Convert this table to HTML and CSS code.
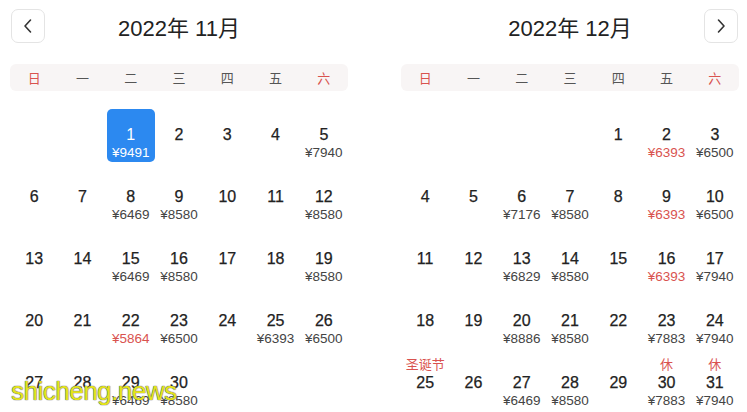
FILE: index.html
```html
<!DOCTYPE html>
<html lang="zh-CN">
<head>
    <meta charset="UTF-8">
    <meta name="viewport" content="width=device-width, initial-scale=1.0">
    <title>选择日期</title>
    <link rel="stylesheet" href="styles.css">
</head>
<body>
    <div class="calendars">
        <div class="month" id="month-11">
            <div class="month-head">
                <button class="nav-btn" aria-label="上个月">
                    <svg width="12" height="16" viewBox="0 0 12 16"><path d="M8.5 2 L3 8 L8.5 14" fill="none" stroke="#333" stroke-width="1.6" stroke-linecap="round" stroke-linejoin="round"/></svg>
                </button>
                <div class="month-title">2022年 11月</div>
                <span></span>
            </div>
            <div class="weekdays">
                <span class="red">日</span><span>一</span><span>二</span><span>三</span><span>四</span><span>五</span><span class="red">六</span>
            </div>
            <div class="days" data-offset="2" data-count="30"></div>
        </div>

        <div class="month" id="month-12">
            <div class="month-head">
                <span></span>
                <div class="month-title">2022年 12月</div>
                <button class="nav-btn" aria-label="下个月">
                    <svg width="12" height="16" viewBox="0 0 12 16"><path d="M3.5 2 L9 8 L3.5 14" fill="none" stroke="#333" stroke-width="1.6" stroke-linecap="round" stroke-linejoin="round"/></svg>
                </button>
            </div>
            <div class="weekdays">
                <span class="red">日</span><span>一</span><span>二</span><span>三</span><span>四</span><span>五</span><span class="red">六</span>
            </div>
            <div class="days" data-offset="4" data-count="31"></div>
        </div>
    </div>

    <div class="watermark">shicheng.news</div>

    <script>
        // цены по дням: [цена, дешёвая?, метка]
        var prices = {
            'month-11': {
                1: ['9491'], 5: ['7940'], 8: ['6469'], 9: ['8580'], 12: ['8580'],
                15: ['6469'], 16: ['8580'], 19: ['8580'],
                22: ['5864', true], 23: ['6500'], 25: ['6393'], 26: ['6500'],
                29: ['6469'], 30: ['8580']
            },
            'month-12': {
                2: ['6393', true], 3: ['6500'],
                6: ['7176'], 7: ['8580'], 9: ['6393', true], 10: ['6500'],
                13: ['6829'], 14: ['8580'], 16: ['6393', true], 17: ['7940'],
                20: ['8886'], 21: ['8580'], 23: ['7883'], 24: ['7940'],
                25: [null, false, '圣诞节'], 27: ['6469'], 28: ['8580'],
                30: ['7883', false, '休'], 31: ['7940', false, '休']
            }
        };
        var selected = { month: 'month-11', day: 1 };

        document.querySelectorAll('.month').forEach(function (month) {
            var grid = month.querySelector('.days');
            var offset = +grid.dataset.offset;
            var count = +grid.dataset.count;
            var data = prices[month.id];

            for (var i = 0; i < offset; i++) {
                grid.appendChild(document.createElement('div'));
            }
            for (var d = 1; d <= count; d++) {
                var info = data[d] || [];
                var cell = document.createElement('div');
                cell.className = 'day';
                if (month.id === selected.month && d === selected.day) cell.className += ' selected';
                cell.innerHTML =
                    '<span class="tag">' + (info[2] || '') + '</span>' +
                    '<span class="num">' + d + '</span>' +
                    '<span class="price' + (info[1] ? ' low' : '') + '">' + (info[0] ? '¥' + info[0] : '') + '</span>';
                grid.appendChild(cell);
            }
        });
    </script>
</body>
</html>
```

FILE: styles.css
```css
body {
    margin: 0;
    padding: 0 8px 0 10px;
    background: #fff;
    font-family: "Liberation Sans", "Noto Sans CJK SC", sans-serif;
    color: #222;
}
.calendars {
    display: flex;
    gap: 53px;
}
.month {
    width: 338px;
}
.month-head {
    display: grid;
    grid-template-columns: 35px 1fr 35px;
    align-items: center;
    height: 52px;
}
.month-title {
    text-align: center;
    font-size: 22px;
    color: #222;
}
.nav-btn {
    width: 34px;
    height: 34px;
    padding: 0;
    display: flex;
    align-items: center;
    justify-content: center;
    background: #fff;
    border: 1px solid #e4e4e4;
    border-radius: 7px;
    margin-left: 1px;
}
.month-head .nav-btn:last-child {
    margin-left: 0;
}
.weekdays {
    display: grid;
    grid-template-columns: repeat(7, 1fr);
    height: 27px;
    margin-top: 12px;
    align-items: center;
    background: #f8f5f5;
    border-radius: 6px;
    text-align: center;
    font-size: 13px;
    color: #555;
}
.weekdays .red {
    color: #d9534f;
}
.days {
    display: grid;
    grid-template-columns: repeat(7, 1fr);
    grid-auto-rows: 62px;
    margin-top: 9px;
}
.day {
    display: flex;
    flex-direction: column;
    align-items: center;
    margin-top: 9px;
    height: 53px;
    border-radius: 5px;
}
.day .tag {
    height: 15px;
    line-height: 15px;
    font-size: 13px;
    color: #d9534f;
}
.day .num {
    height: 22px;
    line-height: 22px;
    font-size: 16px;
    color: #222;
    -webkit-text-stroke: 0.25px #222;
}
.day .price {
    height: 14px;
    line-height: 14px;
    font-size: 13.5px;
    color: #444;
}
.day .price.low {
    color: #d9534f;
}
.day.selected {
    background: #2c89f0;
}
.day.selected .num,
.day.selected .price {
    color: #fff;
    -webkit-text-stroke: 0;
}
.watermark {
    position: absolute;
    left: 11px;
    top: 376px;
    font-size: 26px;
    color: #e4e41c;
    text-shadow: 0 0 1px #555, 0 0 1px #555;
    letter-spacing: -0.5px;
}
```
